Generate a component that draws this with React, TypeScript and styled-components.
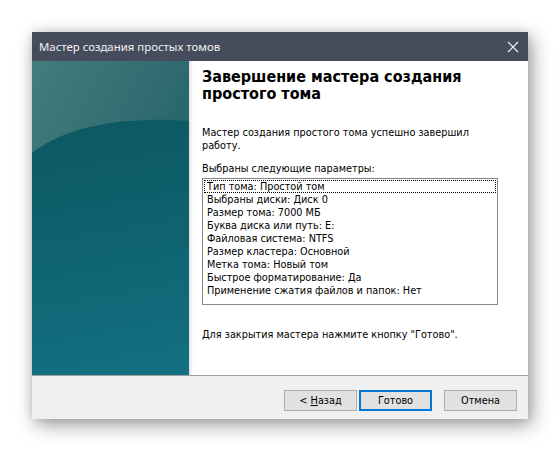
import React from 'react'
import styled, { createGlobalStyle } from 'styled-components'

const GlobalStyle = createGlobalStyle`
    html, body {
        margin: 0;
        padding: 0;
        background: #ffffff;
    }
`

const Page = styled.div`
    width: 560px;
    height: 453px;
    padding: 32px;
    box-sizing: border-box;
`

const Dialog = styled.div`
    width: 496px;
    display: flex;
    flex-direction: column;
    box-shadow: 4px 6px 18px rgba(0, 0, 0, 0.38), 0 0 10px rgba(0, 0, 0, 0.12);
    font-family: "DejaVu Sans Condensed", "DejaVu Sans", sans-serif;
    font-size: 10.8px;
    color: #000;
`

const TitleBar = styled.div`
    height: 29px;
    background: #454c5c;
    display: flex;
    align-items: center;
    justify-content: space-between;
    padding: 0 9px 0 7px;
    color: #f2f2f2;
    font-family: "Noto Sans", "Open Sans", sans-serif;
    font-size: 11.4px;
`

const Close = styled.svg`
    width: 12px;
    height: 12px;
`

const Body = styled.div`
    display: flex;
    height: 314px;
    background: #fff;
`

const Side = styled.div`
    width: 157px;
    flex-shrink: 0;
    background: linear-gradient(170deg, #0b535c 0%, #0e5f6b 45%, #137082 100%);
`

const SideArt = styled.svg`
    display: block;
    width: 157px;
    height: 314px;
`

const Content = styled.div`
    flex: 1;
    padding: 7px 0 0 13px;
    box-shadow: inset 4px 0 3px -2px rgba(0, 0, 0, 0.12);
`

const Heading = styled.h1`
    margin: 0;
    font-family: "DejaVu Sans Condensed", "DejaVu Sans", sans-serif;
    font-weight: bold;
    font-size: 16px;
    line-height: 17px;
    width: 300px;
`

const Text = styled.p<{ $top: number }>`
    margin: ${p => p.$top}px 0 0 0;
    line-height: 13px;
    width: 300px;
`

const ListBox = styled.div`
    margin-top: 3px;
    width: 296px;
    height: 127px;
    box-sizing: border-box;
    border: 1px solid #828790;
    padding: 1px;
`

const Item = styled.div<{ $focus?: boolean }>`
    height: 13px;
    line-height: 12px;
    padding-left: 2px;
    box-sizing: border-box;
    border: 1px dotted ${p => (p.$focus ? '#000' : 'transparent')};
`

const Footer = styled.div`
    height: 44px;
    border-top: 1px solid #a0a0a0;
    background: #f0f0f0;
    display: flex;
    justify-content: flex-end;
    align-items: flex-start;
    padding: 14px 11px 0 0;
    box-sizing: border-box;
`

const Button = styled.button<{ $default?: boolean; $gap?: number }>`
    width: 73px;
    height: 21px;
    margin-left: ${p => p.$gap ?? 0}px;
    background: #e1e1e1;
    border: ${p => (p.$default ? '2px solid #0078d7' : '1px solid #adadad')};
    font-family: "DejaVu Sans Condensed", "DejaVu Sans", sans-serif;
    font-size: 10.8px;
    color: #000;
    padding: 0;
`

const Accel = styled.span`
    text-decoration: underline;
`

const params = [
    'Тип тома: Простой том',
    'Выбраны диски: Диск 0',
    'Размер тома: 7000 МБ',
    'Буква диска или путь: E:',
    'Файловая система: NTFS',
    'Размер кластера: Основной',
    'Метка тома: Новый том',
    'Быстрое форматирование: Да',
    'Применение сжатия файлов и папок: Нет',
]

const App = () => {
    return (
        <Page>
            <GlobalStyle />
            <Dialog>
                <TitleBar>
                    <span>Мастер создания простых томов</span>
                    <Close viewBox="0 0 12 12">
                        <path d="M1 1 L11 11 M11 1 L1 11" stroke="#f2f2f2" strokeWidth="1.2" />
                    </Close>
                </TitleBar>
                <Body>
                    <Side>
                        <SideArt viewBox="0 0 157 314">
                            <defs>
                                <linearGradient id="top" x1="0" y1="0" x2="1" y2="0.3">
                                    <stop offset="0" stopColor="#457c7c" />
                                    <stop offset="1" stopColor="#2b686e" />
                                </linearGradient>
                            </defs>
                            <path d="M0 0 H157 V60 C110 56 40 60 0 92 Z" fill="url(#top)" />
                        </SideArt>
                    </Side>
                    <Content>
                        <Heading>Завершение мастера создания простого тома</Heading>
                        <Text $top={24}>Мастер создания простого тома успешно завершил работу.</Text>
                        <Text $top={10}>Выбраны следующие параметры:</Text>
                        <ListBox>
                            {params.map((p, i) => (
                                <Item key={p} $focus={i === 0}>{p}</Item>
                            ))}
                        </ListBox>
                        <Text $top={23}>Для закрытия мастера нажмите кнопку "Готово".</Text>
                    </Content>
                </Body>
                <Footer>
                    <Button>&lt; <Accel>Н</Accel>азад</Button>
                    <Button $default $gap={2}>Готово</Button>
                    <Button $gap={12}>Отмена</Button>
                </Footer>
            </Dialog>
        </Page>
    )
}

export default App
